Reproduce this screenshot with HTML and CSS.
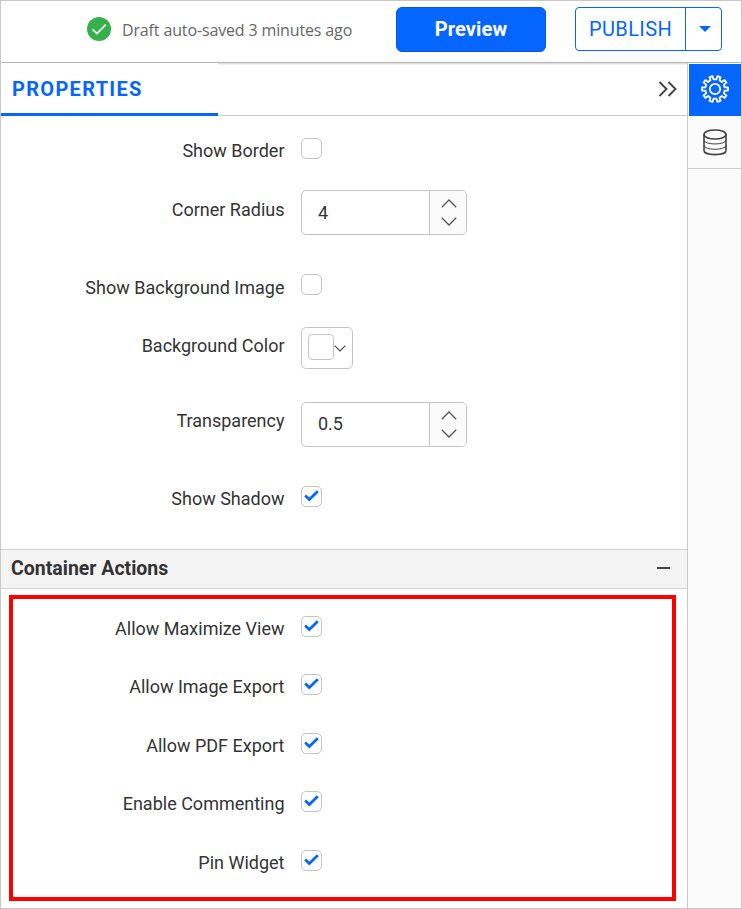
FILE: index.html
```html
<!DOCTYPE html>
<html lang="en">
<head>
<meta charset="utf-8">
<title>Widget properties</title>
<link rel="stylesheet" href="styles.css">
</head>
<body>
<svg class="defs" width="0" height="0" aria-hidden="true">
  <symbol id="tick" viewBox="0 0 19 19"><path d="M3.200 8.500 7.300 12.500 15.800 4.300" fill="none" stroke="#0565ff" stroke-width="2.700"/></symbol>
  <symbol id="up" viewBox="0 0 16 9"><path d="M.8 8.200 8 1l7.200 7.200" fill="none" stroke="#555" stroke-width="1.300"/></symbol>
  <symbol id="down" viewBox="0 0 16 9"><path d="M.8.8 8 8 15.200.8" fill="none" stroke="#555" stroke-width="1.300"/></symbol>
</svg>
<div class="app">
  <header class="topbar">
    <svg class="saved-icon" viewBox="0 0 24 24"><circle cx="12" cy="12" r="12" fill="#36b04b"/><path d="M5.500 12.300 9.900 16.500 18.700 7.600" fill="none" stroke="#fff" stroke-width="1.700"/></svg>
    <span class="saved-text">Draft auto-saved 3 minutes ago</span>
    <button class="preview">Preview</button>
    <div class="publish">
      <button class="publish-main">PUBLISH</button>
      <button class="publish-more" aria-label="More"><svg width="12" height="6" viewBox="0 0 12 6"><path d="M0 0h12L6 6z" fill="#0565ff"/></svg></button>
    </div>
  </header>
  <div class="body">
    <main class="panel">
      <div class="tabs">
        <div class="tab">PROPERTIES</div>
        <svg class="collapse" width="20" height="16" viewBox="0 0 20 16"><path d="M1.500 1 8.500 8l-7 7M10.500 1l7 7-7 7" fill="none" stroke="#444" stroke-width="1.900"/></svg>
      </div>
      <section class="general">
        <div class="row border"><label>Show Border</label><span class="check"></span></div>
        <div class="row radius"><label>Corner Radius</label>
          <div class="number"><span class="value">4</span><span class="spin"><svg><use href="#up"/></svg><svg><use href="#down"/></svg></span></div></div>
        <div class="row image"><label>Show Background Image</label><span class="check"></span></div>
        <div class="row color"><label>Background Color</label>
          <div class="picker"><span class="swatch"></span><svg width="12" height="7" viewBox="0 0 12 7"><path d="M.7.7 6 6 11.300.7" fill="none" stroke="#444" stroke-width="1.100"/></svg></div></div>
        <div class="row alpha"><label>Transparency</label>
          <div class="number"><span class="value">0.5</span><span class="spin"><svg><use href="#up"/></svg><svg><use href="#down"/></svg></span></div></div>
        <div class="row shadow"><label>Show Shadow</label><span class="check"><svg><use href="#tick"/></svg></span></div>
      </section>
      <div class="section-head"><h2>Container Actions</h2><span class="minus"></span></div>
      <section class="actions">
        <div class="row"><label>Allow Maximize View</label><span class="check"><svg><use href="#tick"/></svg></span></div>
        <div class="row"><label>Allow Image Export</label><span class="check"><svg><use href="#tick"/></svg></span></div>
        <div class="row"><label>Allow PDF Export</label><span class="check"><svg><use href="#tick"/></svg></span></div>
        <div class="row"><label>Enable Commenting</label><span class="check"><svg><use href="#tick"/></svg></span></div>
        <div class="row"><label>Pin Widget</label><span class="check"><svg><use href="#tick"/></svg></span></div>
      </section>
    </main>
    <aside class="rail">
      <div class="rail-item active">
        <svg width="30" height="30" viewBox="-15 -15 30 30" fill="none" stroke="#fff" stroke-width="1.800" stroke-linejoin="round"><circle r="5.200"/><path id="gear" d=""/></svg>
      </div>
      <div class="rail-item">
        <svg width="24" height="27" viewBox="0 0 24 27" fill="none" stroke="#444" stroke-width="1.600"><ellipse cx="12" cy="5.500" rx="11" ry="4.500"/><path d="M1 5.500V21.500C1 27 23 27 23 21.500V5.500"/><path d="M1 11c0 5.300 22 5.300 22 0M1 16.300c0 5.300 22 5.300 22 0" stroke-width="1"/></svg>
      </div>
    </aside>
  </div>
</div>
<script src="gear.js"></script>
</body>
</html>
```
FILE: gear.js
```js
// Builds the outline of a ten-tooth gear centred on the origin.
const TEETH = 10;
const points = [];
for (let i = 0; i < TEETH; i++) {
  for (const [angle, radius] of [[-9.5, 9.8], [-7, 13.1], [7, 13.1], [9.5, 9.8]]) {
    const t = (i * 360 / TEETH + angle + 18) * Math.PI / 180;
    points.push((radius * Math.sin(t)).toFixed(2) + ' ' + (-radius * Math.cos(t)).toFixed(2));
  }
}
document.getElementById('gear').setAttribute('d', 'M' + points.join('L') + 'Z');
```
FILE: styles.css
```css
* { box-sizing: border-box; }
body { margin: 0; font-family: Roboto, sans-serif; color: #333; background: #fff; }
.defs { display: block; }
button { font-family: inherit; margin: 0; padding: 0; }
.app { width: 742px; height: 909px; border: 1px solid #c8c8c8; display: flex; flex-direction: column; overflow: hidden; }
.topbar { height: 62px; flex: none; display: flex; align-items: flex-start; border-bottom: 1px solid #b3b3b3; padding: 6px 19px 0 86px; box-shadow: 0 1px 2px rgba(0,0,0,.18); }
.saved-icon { width: 24px; height: 24px; margin-top: 10px; flex: none; }
.saved-text { font: 16px/24px "Open Sans", sans-serif; letter-spacing: -.14px; color: #666; margin: 11px 0 0 11px; width: 274px; white-space: nowrap; }
.preview { width: 150px; height: 45px; background: #0565ff; color: #fff; border: 1px solid #0558dc; border-radius: 6px; font-size: 20px; line-height: 43px; letter-spacing: .15px; font-weight: 700; flex: none; }
.publish { margin-left: auto; display: flex; width: 147px; height: 44px; border: 1px solid #0565ff; border-radius: 4px; }
.publish button { border: 0; background: none; color: #0565ff; font-size: 20px; }
.publish-main { width: 109px; letter-spacing: .4px; }
.publish .publish-more { flex: 1; border-left: 1px solid #0565ff; display: flex; align-items: center; justify-content: center; padding-left: 2px; }
.body { flex: 1; display: flex; min-height: 0; }
.panel { width: 687px; border-right: 1px solid #c8c8c8; }
.tabs { height: 53px; border-bottom: 1px solid #ccc; display: flex; justify-content: space-between; }
.tab { width: 217px; height: 53px; border-bottom: 3px solid #0565ff; background: #fff; padding-left: 11px; font-size: 20px; line-height: 52px; font-weight: 700; letter-spacing: 1.3px; color: #0565ff; }
.collapse { margin: 18px 9.5px 0 0; }
.general { height: 433px; padding-top: 22px; }
.row { display: grid; grid-template-columns: 283.5px 1fr; column-gap: 16.5px; align-items: start; justify-items: start; }
.row label { justify-self: end; font-size: 18px; line-height: 22px; margin: 2px 0 -5px; white-space: nowrap; }
.check { width: 21px; height: 21px; border: 1px solid #c4c4c4; border-radius: 5px; display: block; }
.check svg { width: 19px; height: 19px; display: block; }
.radius { margin-top: 31px; }
.image { margin-top: 39px; }
.color { margin-top: 32px; }
.alpha { margin-top: 33px; }
.shadow { margin-top: 39px; }
.radius label { margin-top: 9px; }
.image label { margin-top: 3px; }
.color label, .alpha label { margin-top: 8px; }
.number { display: flex; width: 166px; height: 45px; border: 1px solid #c4c4c4; border-radius: 5px; overflow: hidden; }
.value { width: 127px; padding-left: 16px; font-size: 18px; line-height: 44px; }
.alpha .value { line-height: 42px; }
.spin { flex: 1; border-left: 1px solid #c4c4c4; background: #fbfbfb; display: flex; flex-direction: column; align-items: center; gap: 9px; padding: 8px 0 0 2px; }
.spin svg { width: 16px; height: 9px; }
.picker { width: 52px; height: 42px; border: 1px solid #c4c4c4; border-radius: 5px; display: flex; align-items: center; padding-left: 6px; }
.swatch { width: 26px; height: 26px; border: 1px solid #c4c4c4; border-radius: 4px; margin-top: -2px; }
.picker svg { margin-top: 1px; }
.section-head { height: 40px; background: #f4f4f4; border: solid #d0d0d0; border-width: 1px 0; display: flex; justify-content: space-between; padding: 0 17px 0 10px; }
h2 { margin: 0; font-size: 19.5px; line-height: 37px; font-weight: 700; }
.minus { width: 13px; height: 2px; background: #444; margin-top: 17px; }
.actions { margin: 6px 11px 0 8px; height: 306px; border: 4px solid #f00; padding-top: 16.9px; display: grid; grid-auto-rows: 58.5px; }
.actions .row { grid-template-columns: 271.5px 1fr; }
.rail { flex: 1; background: #fbfbfb; }
.rail-item { height: 53px; display: flex; align-items: center; justify-content: center; border-bottom: 1px solid #ccc; }
.rail-item.active { height: 52px; margin: 1px 0 0 1px; padding-bottom: 2px; background: #0565ff; border: 0; }
```
